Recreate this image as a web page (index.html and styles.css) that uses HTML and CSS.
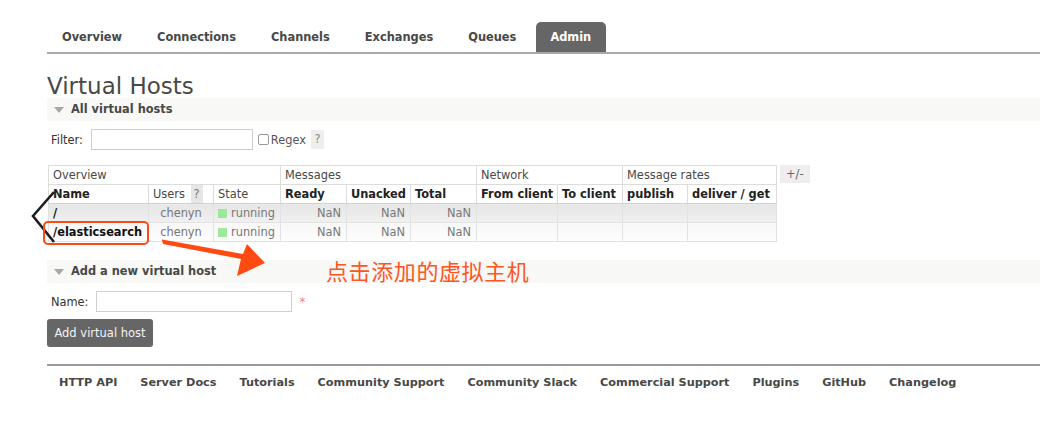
FILE: index.html
```html
<!DOCTYPE html>
<html>
<head>
<meta charset="utf-8">
<link rel="stylesheet" href="styles.css">
</head>
<body>
<div class="page">
  <ul class="nav">
    <li>Overview</li>
    <li>Connections</li>
    <li>Channels</li>
    <li>Exchanges</li>
    <li>Queues</li>
    <li class="active">Admin</li>
  </ul>

  <h1 class="title">Virtual Hosts</h1>

  <div class="band"><span class="tri"></span>All virtual hosts</div>

  <div class="filter-row">
    <span class="lbl">Filter:</span>
    <span class="input filter-input"></span>
    <span class="check"></span>
    <span class="regex">Regex</span>
    <span class="help">?</span>
  </div>

  <div class="table-row">
    <table class="list">
      <colgroup>
        <col class="c-name"><col class="c-users"><col class="c-state"><col class="c-ready"><col class="c-unacked"><col class="c-total"><col class="c-from"><col class="c-to"><col class="c-pub"><col class="c-del">
      </colgroup>
      <thead>
        <tr class="grp">
          <th colspan="3">Overview</th>
          <th colspan="3">Messages</th>
          <th colspan="2">Network</th>
          <th colspan="2">Message rates</th>
        </tr>
        <tr class="cols">
          <th class="b">Name</th>
          <th class="users">Users <span class="help-cell">?</span></th>
          <th>State</th>
          <th class="b">Ready</th>
          <th class="b">Unacked</th>
          <th class="b">Total</th>
          <th class="b">From client</th>
          <th class="b">To client</th>
          <th class="b">publish</th>
          <th class="b">deliver / get</th>
        </tr>
      </thead>
      <tbody>
        <tr class="odd">
          <td class="name">/</td>
          <td class="c">chenyn</td>
          <td><span class="sq"></span>running</td>
          <td class="r">NaN</td>
          <td class="r">NaN</td>
          <td class="r">NaN</td>
          <td></td><td></td><td></td><td></td>
        </tr>
        <tr class="even">
          <td class="name">/elasticsearch</td>
          <td class="c">chenyn</td>
          <td><span class="sq"></span>running</td>
          <td class="r">NaN</td>
          <td class="r">NaN</td>
          <td class="r">NaN</td>
          <td></td><td></td><td></td><td></td>
        </tr>
      </tbody>
    </table>
    <span class="plusminus">+/-</span>
  </div>

  <div class="band band2"><span class="tri"></span>Add a new virtual host</div>

  <div class="name-row">
    <span class="lbl">Name:</span>
    <span class="input name-input"></span>
    <span class="req">*</span>
  </div>

  <div class="btn">Add virtual host</div>

  <ul class="footer">
    <li>HTTP API</li>
    <li>Server Docs</li>
    <li>Tutorials</li>
    <li>Community Support</li>
    <li>Community Slack</li>
    <li>Commercial Support</li>
    <li>Plugins</li>
    <li>GitHub</li>
    <li>Changelog</li>
  </ul>
</div>

<svg class="annot" width="1040" height="441" viewBox="0 0 1040 441">
  <polyline points="54,192 33,216 54,242" fill="none" stroke="#1e1e1e" stroke-width="2.6" stroke-linejoin="miter"/>
  <rect x="44" y="222" width="104" height="22" rx="4" ry="4" fill="none" stroke="#ff4a12" stroke-width="2"/>
  <polygon points="162,240.5 163,244 241,259 237,276 265,263 247,244 243,254 162,239.5" fill="#ff4a12"/>
</svg>
<div class="note">点击添加的虚拟主机</div>
</body>
</html>
```

FILE: styles.css
```css
html, body {
  margin: 0;
  padding: 0;
  background: #fff;
}

body {
  font-family: "DejaVu Sans", Verdana, sans-serif;
  font-size: 11.4px;
  color: #484848;
  position: relative;
  width: 1040px;
  height: 441px;
  overflow: hidden;
}

.page {
  padding-left: 47px;
}

/* nav */
.nav {
  list-style: none;
  margin: 22px 0 0 0;
  padding: 0;
  display: flex;
  height: 30px;
  border-bottom: 2px solid #a9a9a9;
}

.nav li {
  font-weight: bold;
  font-size: 11.4px;
  line-height: 30px;
  padding: 0 14px 0 15px;
  margin-right: 6px;
  color: #484848;
}

.nav li.active {
  background: #666;
  color: #fff;
  border-radius: 5px 5px 0 0;
  padding: 0 15px 0 14px;
}

/* title */
.title {
  margin: 20px 0 0 0;
  height: 24px;
  line-height: 24px;
  font-size: 23px;
  font-weight: normal;
  color: #484848;
}

/* band */
.band {
  background: #f8f8f6;
  height: 23px;
  line-height: 23px;
  font-weight: bold;
  display: flex;
  align-items: center;
  padding-left: 7px;
}

.tri {
  width: 0;
  height: 0;
  border-left: 5px solid transparent;
  border-right: 5px solid transparent;
  border-top: 6px solid #a8a8a8;
  margin-right: 7px;
  margin-top: 1px;
}

/* filter */
.filter-row {
  display: flex;
  align-items: center;
  margin-top: 8px;
  height: 21px;
}

.lbl {
  padding-left: 4px;
  color: #333;
}

.input {
  display: block;
  height: 19px;
  border: 1px solid #cfcfcf;
  background: #fff;
}

.filter-input {
  width: 160px;
  margin-left: 8px;
}

.check {
  width: 9px;
  height: 9px;
  border: 1px solid #999;
  border-radius: 2px;
  margin-left: 5px;
}

.regex {
  margin-left: 2px;
  color: #555;
}

.help {
  background: #eee;
  color: #888;
  margin-left: 5px;
  padding: 0 3px;
  line-height: 19px;
  height: 19px;
  width: 7px;
  text-align: center;
}

/* table */
.table-row {
  margin-top: 15px;
  display: flex;
  align-items: flex-start;
}

.list {
  border-collapse: collapse;
  table-layout: fixed;
  width: 728px;
  margin-left: 1px;
}

.c-name { width: 100px; }
.c-users { width: 65px; }
.c-state { width: 67px; }
.c-ready { width: 66px; }
.c-unacked { width: 64px; }
.c-total { width: 66px; }
.c-from { width: 81px; }
.c-to { width: 65px; }
.c-pub { width: 65px; }
.c-del { width: 89px; }

.list th, .list td {
  border: 1px solid #dcdcdc;
  height: 18px;
  padding: 0 4px;
  white-space: nowrap;
  overflow: visible;
  text-align: left;
}

.list th {
  font-weight: normal;
  color: #484848;
  background: #fff;
}

.list th.b {
  font-weight: bold;
  color: #222;
}

.list tr.cols th {
  border-bottom: 1px solid #d0d0d0;
}

.list th.users {
  padding-right: 0;
}

.help-cell {
  display: inline-block;
  background: #e6e6e6;
  color: #777;
  padding: 0 3px;
  line-height: 18px;
  margin-left: 2px;
}

.list td {
  color: #777;
  border-color: #e2e2e2;
}

.list tr.odd td {
  background: linear-gradient(#e6e6e6, #f0f0f0);
}

.list tr.even td {
  background: linear-gradient(#f7f7f7, #fdfdfd);
}

.list td.name {
  font-weight: bold;
  color: #111;
}

.list td.c { text-align: center; }
.list td.r { text-align: right; padding-right: 5px; }

.sq {
  display: inline-block;
  width: 9px;
  height: 9px;
  background: #9de89d;
  margin-right: 4px;
  vertical-align: -1px;
}

.plusminus {
  background: #eee;
  color: #666;
  margin-left: 3px;
  padding: 0 6px;
  height: 18px;
  line-height: 18px;
}

/* add section */
.band2 {
  margin-top: 18px;
}

.name-row {
  display: flex;
  align-items: center;
  margin-top: 8px;
  height: 21px;
}

.name-input {
  width: 194px;
  margin-left: 8px;
}

.req {
  color: #f08080;
  margin-left: 7px;
}

.btn {
  margin-top: 7px;
  width: 106px;
  height: 28px;
  line-height: 28px;
  text-align: center;
  background: #666;
  color: #f4f4f4;
  border-radius: 3px;
  font-size: 11.5px;
}

/* footer */
.footer {
  list-style: none;
  margin: 17px 0 0 0;
  padding: 0;
  border-top: 2px solid #9a9a9a;
  display: flex;
  height: 32px;
  align-items: center;
}

.footer li {
  font-weight: bold;
  color: #484848;
  padding: 0 11px 0 12px;
  font-size: 11.25px;
}

/* annotations */
.annot {
  position: absolute;
  left: 0;
  top: 0;
  pointer-events: none;
}

.note {
  position: absolute;
  left: 326px;
  top: 257px;
  font-family: "Noto Sans CJK SC", sans-serif;
  font-size: 22px;
  line-height: 26px;
  color: #ff5522;
  letter-spacing: 0.6px;
}
```
